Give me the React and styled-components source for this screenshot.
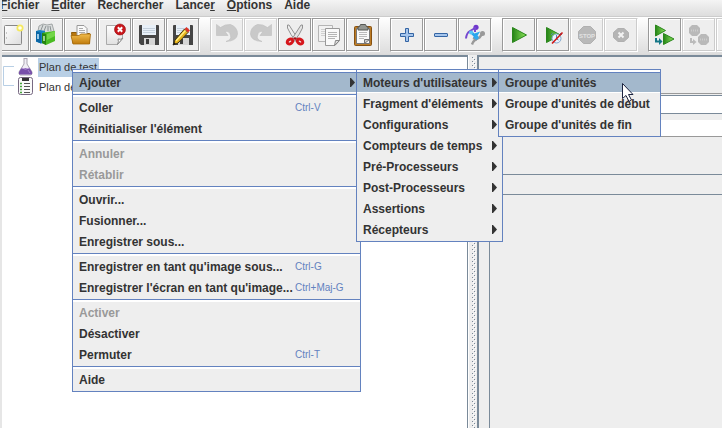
import React from "react";
import styled, { createGlobalStyle, css } from "styled-components";

const Global = createGlobalStyle`
  * { box-sizing: border-box; }
  body {
    margin: 0;
    overflow: hidden;
    background: #eeeeee;
    color: #333333;
    font: bold 12px/14px "Liberation Sans", Arial, sans-serif;
  }
  button { font: inherit; color: inherit; padding: 0; border: 0; background: none; }
`;

const Frame = styled.div`
  position: relative;
  display: flex;
  flex-direction: column;
  min-height: 100vh;
  border-left: 2px solid #e6e6e6;
  overflow: hidden;
`;

const MenuBar = styled.nav`
  display: flex;
  gap: 12px;
  height: 17px;
  margin-left: -2px;
  background: linear-gradient(#f4f4f4, #dddddd);
  border-bottom: 1px solid #cccccc;
`;

const MenuBarItem = styled.button`
  height: 10px;
  line-height: 10px;
  white-space: nowrap;
  text-underline-offset: 1px;
`;

const ToolBar = styled.div`
  display: flex;
  gap: 10px;
  height: 38px;
  padding-top: 1px;
  margin-left: -6px;
  background: linear-gradient(#ffffff, #dddddd);
  border-bottom: 1px solid #dadada;
`;

const ToolGroup = styled.div`
  display: flex;
  flex: none;
`;

const ToolButton = styled.button`
  flex: none;
  display: grid;
  place-items: center;
  width: 34px;
  height: 34px;
  background: #eeeeee;
  border: 1px solid ${(p) => (p.disabled ? "#cccccc" : "#999999")};
  border-right-color: #ffffff;
  border-bottom-color: #ffffff;
  box-shadow: inset -1px -1px 0 ${(p) => (p.disabled ? "#cccccc" : "#999999")},
    inset 1px 1px 0 #ffffff;
`;

const Workspace = styled.main`
  flex: 1;
  display: grid;
  grid-template-columns: 466px 9px minmax(0, 1fr);
`;

const TreePanel = styled.section`
  background: #ffffff;
  border-top: 2px solid #7a8a99;
  border-right: 1px solid #7a8a99;
`;

const Tree = styled.ul`
  list-style: none;
  margin: 0;
  padding: 0;
`;

const TreeRow = styled.li`
  display: flex;
  align-items: center;
  height: 20px;
  font-size: 11px;
  font-weight: normal;
  white-space: nowrap;

  > svg { flex: none; }
`;

const TreeLabel = styled.span`
  margin-left: 1px;
  padding: 0 2px 0 1px;
  line-height: 19px;
  background: ${(p) => (p.$selected ? "#b8cfe5" : "transparent")};
`;

const Splitter = styled.div`
  display: flex;
  flex-direction: column;
  padding: 2px 0 0 3px;
  background: #eeeeee;
  border-left: 1px solid #ffffff;
`;

const Bumps = styled.svg`
  flex: 1;
  width: 5px;
`;

const Editor = styled.section`
  display: flex;
  flex-direction: column;
  border-top: 2px solid #7a8a99;
  border-left: 2px solid #7a8a99;
  padding-top: 36px;
`;

const NameRow = styled.div`
  border-top: 1px solid #999999;
  padding-top: 1px;
`;

const Field = styled.input`
  display: block;
  width: 100%;
  height: 19px;
  padding: 0 4px;
  font: inherit;
  background: #ffffff;
  border: 1px solid #7a8a99;
  border-width: 1px 0;
`;

const CommentField = styled(Field)`
  height: 17px;
  margin-top: 6px;
  border-width: 0 0 1px;
  border-color: #999999;
`;

const Details = styled.div`
  flex: 1;
  display: flex;
  flex-direction: column;
  margin: 37px 0 0 10px;
  border-top: 1px solid #7a8a99;
  padding-top: 19px;
`;

const DetailsBody = styled.div`
  flex: 1;
  border-top: 1px solid #7a8a99;
  border-left: 1px solid #7a8a99;
`;

const Menu = styled.ul`
  position: absolute;
  z-index: 2;
  left: ${(p) => p.$left}px;
  top: ${(p) => p.$top}px;
  width: ${(p) => p.$width}px;
  margin: 0;
  padding: 2px 0 1px;
  list-style: none;
  background: #eeeeee;
  border: 1px solid #6382bf;
  box-shadow: inset 0 2px 0 #ffffff;
`;

const MenuEntry = styled.li`
  position: relative;
`;

const highlighted = css`
  background: #a3b8cc;
  border-top-color: #6382bf;
  border-bottom-color: #ffffff;
`;

const MenuItem = styled.button`
  display: flex;
  align-items: center;
  width: 100%;
  height: 21px;
  padding: 0 5px 0 6px;
  border: solid transparent;
  border-width: 1px 0;
  text-align: left;
  white-space: nowrap;
  color: ${(p) => (p.disabled ? "#999999" : "#333333")};
  ${(p) => p.$active && highlighted}
`;

const ItemLabel = styled.span`
  flex: 1;
`;

const Shortcut = styled.kbd`
  width: 60px;
  font: 10px/14px "Liberation Sans", Arial, sans-serif;
  color: #6382bf;
`;

const Separator = styled.li`
  height: 4px;
  padding-top: 1px;

  &::before {
    content: "";
    display: block;
    height: 2px;
    background: #ffffff;
    border-top: 1px solid #6382bf;
  }
`;

const Pointer = styled.svg`
  position: absolute;
  z-index: 3;
  left: 618px;
  top: 83px;
`;

const Icon = ({ children }) => (
  <svg width="24" height="24" viewBox="0 0 24 24" aria-hidden="true">{children}</svg>
);

const Grad = ({ id, from, to, x2 = 0, y2 = 1 }) => (
  <linearGradient id={id} x1="0" y1="0" x2={x2} y2={y2}>
    <stop offset="0" stopColor={from} />
    <stop offset="1" stopColor={to} />
  </linearGradient>
);

const NewIcon = () => (
  <Icon>
    <Grad id="newPage" from="#ffffff" to="#dddddd" x2={1} />
    <rect x="3.5" y="2.5" width="17" height="19" rx="1" fill="url(#newPage)" stroke="#888888" />
    <path d="M5 10h1M5 15h1" stroke="#999999" />
    <circle cx="19" cy="5" r="3.5" fill="#f5e95f" />
    <circle cx="19" cy="5" r="1.8" fill="#fffff0" />
  </Icon>
);

const TemplatesIcon = () => (
  <Icon>
    <path d="M3 8l1-5 4-2 4 1 5-1 2 7-5 3z" fill="#d9dcdc" stroke="#909696" strokeWidth="0.8" />
    <path d="M6 7l2-5M9 8l2-5M13 8V3M16 8l-1-5" stroke="#777f80" strokeWidth="0.8" />
    <path d="M1 8l4-1 5 1v12l-4 .5-5-2z" fill="#1582c4" />
    <path d="M1 8l5 2v10.5l-5-2z" fill="#0b66a5" />
    <path d="M3 11v5" stroke="#bfe3f7" strokeWidth="1.6" />
    <path d="M7 10l5-1 8-1v10l-9 4-4-2z" fill="#49bb22" />
    <path d="M7 10l4 1v11l-4-2z" fill="#25830f" />
    <path d="M9 13v5" stroke="#d2f3c4" strokeWidth="1.4" />
    <path d="M12 11l8-3v5l-8 4z" fill="#72d648" />
  </Icon>
);

const OpenIcon = () => (
  <Icon>
    <Grad id="folder" from="#f1bc4c" to="#c07b0c" />
    <path d="M2.5 9.500h5l1 1h12v10H4z" fill="#b9780f" stroke="#8f5b08" />
    <path d="M8 2.500h7l3 3v8H8z" fill="#fafafa" stroke="#999999" />
    <path d="M10 5.500h4M10 7.500h6M10 9.500h6" stroke="#aaaaaa" />
    <path d="M2 12.500h8l2-1.500h9.500l-1 10H4z" fill="url(#folder)" stroke="#a4690b" strokeWidth="0.8" />
  </Icon>
);

const CloseIcon = () => (
  <Icon>
    <Grad id="closePage" from="#ffffff" to="#e0e0e0" />
    <path d="M3.500 2.500h16v13l-5 6h-11z" fill="url(#closePage)" stroke="#aaaaaa" />
    <path d="M14.500 21.500q1.500-3 .5-5.500 3 1 5-1z" fill="#ffffff" stroke="#888888" />
    <circle cx="17" cy="6.500" r="5.500" fill="#c9161b" stroke="#960d10" strokeWidth="0.6" />
    <path d="M14.800 4.300l4.400 4.400M19.200 4.300l-4.400 4.400" stroke="#ffffff" strokeWidth="2" />
  </Icon>
);

const Floppy = () => (
  <>
    <path d="M2 3q0-1 1-1h18q1 0 1 1v19H4l-2-2z" fill="#454545" />
    <path d="M5 2h14v10H5z" fill="#e8f0f8" />
    <path d="M6 5.500h12M6 7.500h12M6 9.500h12" stroke="#c4d0dc" />
    <path d="M7 15h11v7H7z" fill="#d5d5d5" />
    <path d="M9 16h3v5H9z" fill="#3c3c3c" />
  </>
);

const SaveIcon = () => <Icon><Floppy /></Icon>;

const SaveAsIcon = () => (
  <Icon>
    <Floppy />
    <path d="M2 22l2-5L13.500 6l3.500 3.500L7 20z" fill="#e9b41b" stroke="#3e3517" />
    <path d="M5 18L14.500 7.500" stroke="#fff08b" strokeWidth="1.2" />
    <path d="M13.500 6l2-2 3.500 3.500-2 2z" fill="#dd3326" />
    <path d="M2 22l1-3 2 2z" fill="#171717" />
  </Icon>
);

const Turn = () => (
  <path d="M1.500 1.500l4 3Q10 1 15.500 1.500 22.500 4 22.500 11 22 18 11 18.500q6-2 4.500-6Q14.500 7.500 10 8.500l3 4H1.500z" fill="#c9c9c9" stroke="#bdbdbd" strokeWidth="0.6" />
);
const UndoIcon = () => <Icon><Turn /></Icon>;
const RedoIcon = () => <Icon><g transform="matrix(-1 0 0 1 24 0)"><Turn /></g></Icon>;

const CutIcon = () => (
  <Icon>
    <path d="M4.500 2L6 2l9 14-2 2.500Q7 11 4.500 5z" fill="#eeeeee" stroke="#888888" strokeWidth="0.9" />
    <path d="M19.500 2L18 2 9 16l2 2.500Q17 11 19.500 5z" fill="#e4e4e4" stroke="#888888" strokeWidth="0.9" />
    <ellipse cx="7" cy="18.500" rx="3" ry="2.200" fill="none" stroke="#d6161c" strokeWidth="3" transform="rotate(-35 7 18.500)" />
    <ellipse cx="17" cy="18.500" rx="3" ry="2.200" fill="none" stroke="#d6161c" strokeWidth="3" transform="rotate(35 17 18.500)" />
    <path d="M10 15.500l2-1.500 2 1.500-2 1.500z" fill="#aa1015" />
  </Icon>
);

const CopyIcon = () => (
  <Icon>
    <path d="M1.500 2.500h14v16h-14z" fill="#f2f2f2" stroke="#b5b5b5" />
    <path d="M4 6.500h8M4 8.500h8M4 10.500h8M4 12.500h6" stroke="#d0d0d0" />
    <path d="M8.500 5.500h14v12l-4.500 5H8.500z" fill="#fafafa" stroke="#999999" />
    <path d="M11 9.500h9M11 11.500h9M11 13.500h9M11 15.500h7" stroke="#b5b5b5" />
    <path d="M17.500 22.500l1-5h4z" fill="#dddddd" stroke="#888888" />
  </Icon>
);

const PasteIcon = () => (
  <Icon>
    <rect x="3.500" y="3.500" width="17" height="19" rx="1" fill="#bc7b24" stroke="#855112" />
    <path d="M5.500 5.500h13v15h-13z" fill="#fafafa" stroke="#777777" />
    <path d="M8 9.500h8M8 11.500h8M8 13.500h8M8 15.500h5" stroke="#bbbbbb" />
    <path d="M13.500 20.500v-4h5z" fill="#cccccc" stroke="#777777" />
    <path d="M7 7V4q2 0 2.500-2.500h5Q15 4 17 4v3z" fill="#929590" stroke="#555753" />
  </Icon>
);

const PlusIcon = () => (
  <Icon><path d="M10.500 5.500h3v5h5v3h-5v5h-3v-5h-5v-3h5z" fill="#a5c5ec" stroke="#3465a4" strokeLinejoin="round" /></Icon>
);
const MinusIcon = () => (
  <Icon><rect x="5.500" y="10.500" width="13" height="3" rx="0.500" fill="#a5c5ec" stroke="#3465a4" /></Icon>
);

const ToggleIcon = () => (
  <Icon>
    <path d="M9 21.500q1-3 3.500-5l4-2 3-4" fill="none" stroke="#999999" strokeWidth="2.400" />
    <circle cx="19.500" cy="10.500" r="2.500" fill="#999999" />
    <path d="M10 15l4 2" stroke="#999999" strokeWidth="2" />
    <path d="M3 15.500Q3.500 10 7 8l6-3.500" fill="none" stroke="#7547cf" strokeWidth="2" />
    <circle cx="13" cy="4.300" r="2.600" fill="#6f35cc" />
    <path d="M12 4v5" stroke="#7547cf" strokeWidth="2" />
    <path d="M8 9l3 3 3-1-2 3 2 1" fill="none" stroke="#28a5ed" strokeWidth="2.600" />
    <circle cx="8" cy="9.500" r="2" fill="#55c4f8" />
    <circle cx="13.500" cy="14.500" r="2.200" fill="#30a9ee" />
  </Icon>
);

const PlayIcon = () => (
  <Icon>
    <Grad id="play" from="#248216" to="#8ee75b" x2={1} y2={0} />
    <path d="M5.500 4.500l14 7.500-14 7.500z" fill="url(#play)" stroke="#29861b" strokeLinejoin="round" />
  </Icon>
);
const PlayNoTimerIcon = () => (
  <Icon>
    <path d="M5.500 4.500l14 7.500-14 7.500z" fill="url(#play)" stroke="#29861b" />
    <circle cx="15.500" cy="15.500" r="4.500" fill="#e9f4ff" stroke="#7fa6cc" />
    <path d="M15.500 12v4l2 1M12 10l-2 2M19 10l2 2" fill="none" stroke="#5686b5" />
    <path d="M11 20.500L21.500 9.500" stroke="#cf1717" strokeWidth="1.600" />
  </Icon>
);

const StopIcon = () => (
  <Icon>
    <path d="M8.500 3.500h7l5 5v7l-5 5h-7l-5-5v-7z" fill="#b9b9b9" stroke="#b0b0b0" />
    <text x="12" y="14.500" textAnchor="middle" fontSize="6" fill="#e2e2e2">STOP</text>
  </Icon>
);
const ShutdownIcon = () => (
  <Icon>
    <path d="M9 5.500h6l4.500 4v5l-4.500 4H9l-4.500-4v-5z" fill="#b5b5b5" stroke="#b0b0b0" />
    <path d="M9.500 9.500l5 5M14.500 9.500l-5 5" stroke="#f2f2f2" strokeWidth="2" />
  </Icon>
);
const RemoteStartIcon = () => (
  <Icon>
    <path d="M2.500 2l10 5.500-10 5.500z" fill="url(#play)" stroke="#29861b" />
    <path d="M10.500 10.500L21 16l-10.500 5.500z" fill="url(#play)" stroke="#29861b" />
    <path d="M3 15v3.500h4" fill="none" stroke="#147787" strokeWidth="2" />
    <path d="M6 15l3.500 3.500L6 22z" fill="#147787" />
  </Icon>
);
const RemoteStopIcon = () => (
  <Icon>
    <path d="M5 2h5l3 3v5l-3 3H5l-3-3V5z" fill="#b9b9b9" />
    <path d="M14 11h5l3 3v5l-3 3h-5l-3-3v-5z" fill="#b9b9b9" />
    <path d="M4 7.500h7M13 16.500h7" stroke="#cccccc" strokeWidth="2" strokeDasharray="1 1" />
    <path d="M4 15v4h3" fill="none" stroke="#bbbbbb" strokeWidth="2" />
    <path d="M6 16l3.500 3L6 22z" fill="#bbbbbb" />
  </Icon>
);

const TreeIcon = ({ children }) => (
  <svg width="35" height="20" viewBox="0 0 35 20" aria-hidden="true">{children}</svg>
);
const FlaskIcon = () => (
  <TreeIcon>
    <path d="M12 9.500H1.500V20" fill="none" stroke="#b8cfe5" />
    <path d="M21.500 1.500h4M22 2v5l-5 8q-.5 2.500 1 3h11q1.500-.5 1-3l-5-8V2" fill="#f0edf4" stroke="#aaa5b1" />
    <path d="M19.500 11h8l2.500 4q.5 2.500-1 2.500H18q-1.500 0-1-2.500z" fill="#7850aa" />
    <path d="M19.500 11q4 2 8 0" fill="none" stroke="#c3a9df" />
    <path d="M26 13l2 3" stroke="#a585ca" />
  </TreeIcon>
);
const ClipboardIcon = () => (
  <TreeIcon>
    <path d="M1.500 0v8.500H12" fill="none" stroke="#b8cfe5" />
    <rect x="16.500" y="0.500" width="14" height="17" rx="2" fill="#fafafa" stroke="#776982" />
    <path d="M20 2.500h7" stroke="#333333" strokeWidth="3" />
    <path d="M22 6.500h6M22 9.500h6M22 12.500h6M22 15.500h6" stroke="#555555" />
    <path d="M18 6.500h2M18 9.500h2M18 12.500h2M18 15.500h2" stroke="#48a53c" strokeWidth="1.500" />
  </TreeIcon>
);

const SplitterBumps = () => (
  <Bumps aria-hidden="true">
    <pattern id="bumps" width="5" height="4" patternUnits="userSpaceOnUse">
      <path d="M1 1h1v1H1zM3 3h1v1H3z" fill="#ffffff" />
      <path d="M0 0h1v1H0zM2 2h1v1H2z" fill="#7a8a99" />
    </pattern>
    <rect width="100%" height="100%" fill="url(#bumps)" />
  </Bumps>
);

const SubmenuArrow = () => (
  <svg width="5" height="9" viewBox="0 0 5 9" aria-hidden="true"><path d="M0 0h1l4 4.500L1 9H0z" fill="#333333" /></svg>
);

const toolGroups = [
  [["Nouveau", NewIcon], ["Modèles", TemplatesIcon], ["Ouvrir", OpenIcon], ["Fermer", CloseIcon], ["Enregistrer", SaveIcon], ["Enregistrer sous", SaveAsIcon]],
  [["Annuler", UndoIcon, true], ["Rétablir", RedoIcon, true], ["Couper", CutIcon], ["Copier", CopyIcon], ["Coller", PasteIcon]],
  [["Tout déplier", PlusIcon], ["Tout replier", MinusIcon], ["Permuter", ToggleIcon]],
  [["Lancer", PlayIcon], ["Lancer sans pauses", PlayNoTimerIcon], ["Arrêter", StopIcon, true], ["Interrompre", ShutdownIcon, true]],
  [["Lancer à distance", RemoteStartIcon], ["Arrêter à distance", RemoteStopIcon, true], ["Interrompre à distance", Icon, true]],
];

const menuBar = [["", "F", "ichier"], ["", "E", "diter"], ["Rechercher", "", ""], ["Lance", "r", ""], ["", "O", "ptions"], ["Aide", "", ""]];

const addMenu = {
  left: 283, top: -3, width: 147,
  items: [
    {
      label: "Moteurs d'utilisateurs", active: true,
      submenu: {
        left: 141, top: -3, width: 163,
        items: [{ label: "Groupe d'unités", active: true }, { label: "Groupe d'unités de début" }, { label: "Groupe d'unités de fin" }],
      },
    },
    ...["Fragment d'éléments", "Configurations", "Compteurs de temps", "Pré-Processeurs", "Post-Processeurs", "Assertions", "Récepteurs"]
      .map((label) => ({ label, more: true })),
  ],
};

const contextMenu = {
  left: 70, top: 69, width: 289,
  items: [
    { label: "Ajouter", active: true, submenu: addMenu },
    null,
    { label: "Coller", shortcut: "Ctrl-V" },
    { label: "Réinitialiser l'élément" },
    null,
    { label: "Annuler", disabled: true },
    { label: "Rétablir", disabled: true },
    null,
    { label: "Ouvrir..." },
    { label: "Fusionner..." },
    { label: "Enregistrer sous..." },
    null,
    { label: "Enregistrer en tant qu'image sous...", shortcut: "Ctrl-G" },
    { label: "Enregistrer l'écran en tant qu'image...", shortcut: "Ctrl+Maj-G" },
    null,
    { label: "Activer", disabled: true },
    { label: "Désactiver" },
    { label: "Permuter", shortcut: "Ctrl-T" },
    null,
    { label: "Aide" },
  ],
};

function PopupMenu({ left, top, width, items }) {
  return (
    <Menu role="menu" $left={left} $top={top} $width={width}>
      {items.map((item, i) =>
        item ? (
          <MenuEntry key={i} role="none">
            <MenuItem role="menuitem" $active={item.active} disabled={item.disabled}>
              <ItemLabel>{item.label}</ItemLabel>
              {item.shortcut && <Shortcut>{item.shortcut}</Shortcut>}
              {(item.submenu || item.more) && <SubmenuArrow />}
            </MenuItem>
            {item.submenu && <PopupMenu {...item.submenu} />}
          </MenuEntry>
        ) : (
          <Separator key={i} role="separator" />
        )
      )}
    </Menu>
  );
}

export default function App() {
  return (
    <Frame>
      <Global />
      <MenuBar>
        {menuBar.map(([before, key, after]) => (
          <MenuBarItem key={before + key + after}>{before}{key && <u>{key}</u>}{after}</MenuBarItem>
        ))}
      </MenuBar>
      <ToolBar role="toolbar">
        {toolGroups.map((group, i) => (
          <ToolGroup key={i}>
            {group.map(([name, Glyph, disabled]) => (
              <ToolButton key={name} aria-label={name} disabled={disabled}><Glyph /></ToolButton>
            ))}
          </ToolGroup>
        ))}
      </ToolBar>
      <Workspace>
        <TreePanel>
          <Tree>
            <TreeRow><FlaskIcon /><TreeLabel $selected>Plan de test</TreeLabel></TreeRow>
            <TreeRow><ClipboardIcon /><TreeLabel>Plan de</TreeLabel></TreeRow>
          </Tree>
        </TreePanel>
        <Splitter><SplitterBumps /></Splitter>
        <Editor>
          <NameRow><Field aria-label="Nom" /></NameRow>
          <CommentField aria-label="Commentaires" />
          <Details><DetailsBody /></Details>
        </Editor>
      </Workspace>
      <PopupMenu {...contextMenu} />
      <Pointer width="14" height="21" viewBox="0 0 14 21" aria-hidden="true">
        <path d="M2.500 .5v15l3.500-3 3 6 2.500-1.500-3-5.500h4.500z" fill="#ffffff" stroke="#1c2440" />
      </Pointer>
    </Frame>
  );
}
